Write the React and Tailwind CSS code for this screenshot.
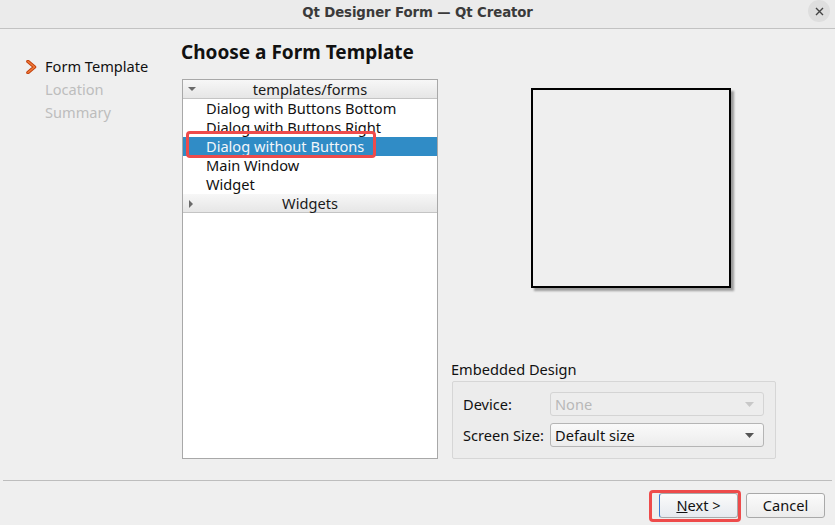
import React from "react";

const F = { fontFamily: '"Noto Sans", "Open Sans", sans-serif' };

function Chevron() {
  return (
    <svg width="11" height="14" viewBox="0 0 11 14" className="block">
      <polyline points="2,1.5 8.5,7 2,12.5" fill="none" stroke="#c2410c" strokeWidth="3.6" strokeLinecap="round" strokeLinejoin="round" />
      <polyline points="2,1.5 8.5,7 2,12.5" fill="none" stroke="#f07a3a" strokeWidth="1.6" strokeLinecap="round" strokeLinejoin="round" />
    </svg>
  );
}

function HeaderRow({ open, label }) {
  return (
    <div className="relative h-[19px] flex items-center justify-center bg-gradient-to-b from-[#f7f7f7] to-[#e6e6e6] border-b border-[#c4c4c4] text-[14.6px] text-[#1a1a1a]">
      <span className="absolute left-[5px] top-[6px]">
        {open ? (
          <svg width="8" height="6" viewBox="0 0 8 6"><polygon points="0,1 8,1 4,5" fill="#6a6a6a" /></svg>
        ) : (
          <svg width="6" height="8" viewBox="0 0 6 8"><polygon points="1,0 5,4 1,8" fill="#6a6a6a" /></svg>
        )}
      </span>
      <span className="leading-none">{label}</span>
    </div>
  );
}

function Item({ label, selected }) {
  return (
    <div className={"h-[19px] flex items-center pl-[23px] text-[14.6px] leading-none " + (selected ? "bg-[#308cc6] text-[#f2f6fa]" : "text-[#111]")}>
      {label}
    </div>
  );
}

function Combo({ value, disabled }) {
  return (
    <div className={"h-[24px] flex-1 flex items-center justify-between rounded-[3px] border px-[4px] " + (disabled ? "border-[#d4d4d4] bg-[#ededed] text-[#b8b8b8]" : "border-[#b5b5b5] bg-gradient-to-b from-[#fafafa] to-[#ececec] text-[#111]")}>
      <span className="text-[14.6px] leading-none">{value}</span>
      <svg width="9" height="5" viewBox="0 0 9 5" className="mr-[5px]"><polygon points="0,0 9,0 4.5,5" fill={disabled ? "#c8c8c8" : "#555"} /></svg>
    </div>
  );
}

export default function App() {
  return (
    <div className="w-[835px] h-[525px] bg-[#efefef] flex flex-col overflow-hidden" style={F}>
      {/* title bar */}
      <div className="relative h-[29px] shrink-0 bg-[#ebebeb] border-b border-[#c2c2c2] flex items-center justify-center">
        <span className="text-[14.8px] font-bold text-[#3a3a3a] leading-none tracking-[-0.1px] pb-[4px]" style={{ fontFamily: '"DejaVu Sans Condensed", "Liberation Sans Narrow", "Liberation Sans", sans-serif' }}>
          Qt Designer Form — Qt Creator
        </span>
        <div className="absolute right-[5px] top-0 w-[22px] h-[22px] rounded-full bg-[#dedede] flex items-center justify-center">
          <svg width="9" height="9" viewBox="0 0 9 9"><path d="M1 1L8 8M8 1L1 8" stroke="#444" strokeWidth="1.4" /></svg>
        </div>
      </div>

      {/* body */}
      <div className="flex h-[451px] shrink-0">
        <div className="w-[181px] shrink-0 pt-[26px] pl-[26px]">
          <div className="h-[23px] flex items-center">
            <Chevron />
            <span className="ml-[8px] text-[14.6px] text-[#111] leading-none">Form Template</span>
          </div>
          <div className="h-[23px] flex items-center pl-[19px] text-[14.6px] text-[#bdbdbd] leading-none">Location</div>
          <div className="h-[23px] flex items-center pl-[19px] text-[14.6px] text-[#bdbdbd] leading-none">Summary</div>
        </div>

        <div className="flex flex-col pt-[11px]">
          <div className="h-[24px] flex items-center text-[19px] font-bold text-[#111] leading-none">Choose a Form Template</div>
          <div className="flex mt-[15px]">
            {/* tree */}
            <div className="relative ml-[1px] w-[256px] h-[380px] bg-white border border-[#a8a8a8]">
              <HeaderRow open label="templates/forms" />
              <Item label="Dialog with Buttons Bottom" />
              <Item label="Dialog with Buttons Right" />
              <Item label="Dialog without Buttons" selected />
              <Item label="Main Window" />
              <Item label="Widget" />
              <HeaderRow label="Widgets" />
              <div className="absolute left-[3px] top-[51px] w-[190px] h-[27px] rounded-[4px] border-[3px] border-[#ee4b4b]" />
            </div>

            {/* right column */}
            <div className="ml-[13px] w-[325px] h-[380px] flex flex-col">
              <div className="ml-[80px] mt-[9px] w-[200px] h-[200px] border-2 border-black bg-[#efefef] shadow-[3px_3px_2px_rgba(0,0,0,0.35)]" />
              <div className="flex-1" />
              <div className="h-[20px] flex items-center text-[14.6px] text-[#111] leading-none">Embedded Design</div>
              <div className="mt-[2px] ml-[1px] h-[78px] border border-[#d6d6d6] rounded-[2px] bg-[#ececec] flex flex-col pl-[10px] pr-[11px] pt-[10px] gap-[7px]">
                <div className="flex items-center">
                  <span className="w-[87px] text-[14.6px] text-[#111] leading-none">Device:</span>
                  <Combo value="None" disabled />
                </div>
                <div className="flex items-center">
                  <span className="w-[87px] text-[14.6px] text-[#111] leading-none">Screen Size:</span>
                  <Combo value="Default size" />
                </div>
              </div>
            </div>
          </div>
        </div>
      </div>

      {/* footer */}
      <div className="mx-[3px] h-px bg-[#bdbdbd] shrink-0" />
      <div className="flex justify-end pt-[12px] pr-[10px]">
        <div className="relative">
          <div className="w-[79px] h-[25px] rounded-[3px] border border-[#a9a9a9] border-l-[#3a7bd5] bg-gradient-to-b from-[#fbfbfb] to-[#e6eaef] flex items-center justify-center text-[14.6px] text-[#111] leading-none">
            <span><span className="underline">N</span>ext &gt;</span>
          </div>
          <div className="absolute -left-[10px] -top-[3px] -right-[3px] -bottom-[4px] rounded-[4px] border-[3px] border-[#ee4b4b]" />
        </div>
        <div className="ml-[8px] w-[79px] h-[25px] rounded-[3px] border border-[#a9a9a9] bg-gradient-to-b from-[#fbfbfb] to-[#ececec] flex items-center justify-center text-[14.6px] text-[#111] leading-none">
          Cancel
        </div>
      </div>
    </div>
  );
}
